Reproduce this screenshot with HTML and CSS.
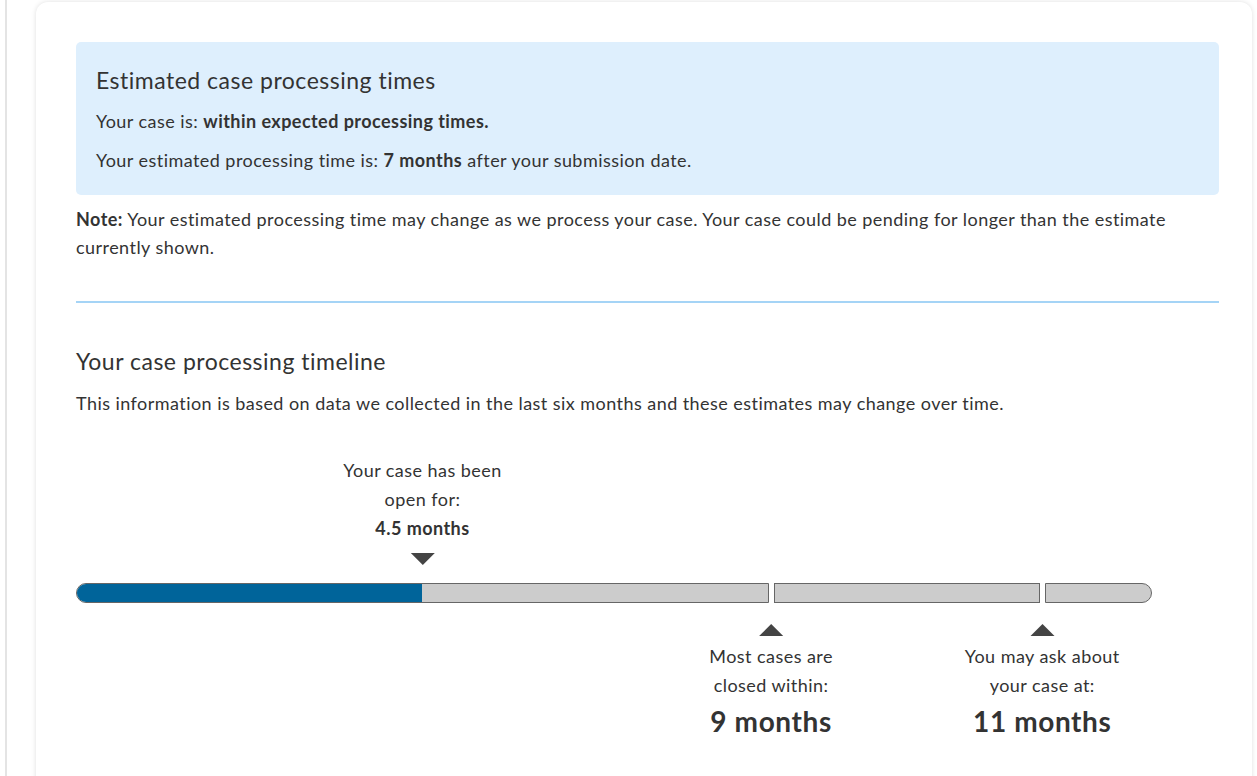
FILE: index.html
```html
<!DOCTYPE html>
<html lang="en">
<head>
<meta charset="utf-8">
<title>Case processing times</title>
<link rel="stylesheet" href="styles.css">
</head>
<body>
<div class="frame">
  <main class="card">
    <section class="info-box">
      <h2 class="box-title">Estimated case processing times</h2>
      <p class="box-line">Your case is: <strong>within expected processing times.</strong></p>
      <p class="box-line">Your estimated processing time is: <strong>7 months</strong> after your submission date.</p>
    </section>
    <p class="note"><strong>Note:</strong> Your estimated processing time may change as we process your case. Your case could be pending for longer than the estimate currently shown.</p>
    <hr class="divider">
    <h2 class="section-title">Your case processing timeline</h2>
    <p class="section-text">This information is based on data we collected in the last six months and these estimates may change over time.</p>

    <div class="timeline">
      <div class="top-row">
        <div class="marker marker-down" style="left: 32.2%">
          <div class="marker-label">Your case has been<br>open for:<br><strong>4.5 months</strong></div>
          <span class="tri tri-down"></span>
        </div>
      </div>
      <div class="bar">
        <div class="seg seg-first" style="flex-basis: 693px"><div class="fill" style="width: 49.9%"></div></div>
        <div class="seg" style="flex-basis: 266px"></div>
        <div class="seg seg-last" style="flex-basis: 107px"></div>
      </div>
      <div class="bottom-row">
        <div class="marker marker-up" style="left: 64.6%">
          <span class="tri tri-up"></span>
          <div class="marker-label">Most cases are<br>closed within:</div>
          <div class="marker-big">9 months</div>
        </div>
        <div class="marker marker-up" style="left: 89.8%">
          <span class="tri tri-up"></span>
          <div class="marker-label">You may ask about<br>your case at:</div>
          <div class="marker-big">11 months</div>
        </div>
      </div>
    </div>
  </main>
</div>
</body>
</html>
```

FILE: styles.css
```css
* { box-sizing: border-box; }

html, body {
  margin: 0;
  padding: 0;
  background: #ffffff;
  height: 100%;
  overflow: hidden;
}

body {
  font-family: "Lato", "Liberation Sans", sans-serif;
  color: #333333;
  font-size: 18px;
  letter-spacing: 0.45px;
}

.frame {
  margin-left: 5px;
  border-left: 2px solid #e4e4e4;
  padding: 2px 5px 0 29px;
  min-height: 100%;
}

.card {
  background: #ffffff;
  border-radius: 12px;
  box-shadow: 0 0 5px rgba(0, 0, 0, 0.13);
  padding: 40px 33px 40px 40px;
  min-height: 800px;
}

.info-box {
  background: #deeffd;
  border-radius: 5px;
  padding: 23px 20px 21px 20px;
}

.box-title {
  margin: 0 0 12px 0;
  font-size: 23px;
  line-height: 30px;
  font-weight: 400;
  letter-spacing: 0.5px;
}

.box-line {
  margin: 0;
  line-height: 28px;
}

.box-line + .box-line { margin-top: 11px; }

strong { font-weight: 700; }

.note {
  margin: 10px 0 0 0;
  line-height: 28px;
}

.divider {
  border: 0;
  height: 2px;
  background: #a5d4f6;
  margin: 40px 0 0 0;
}

.section-title {
  margin: 43px 0 0 0;
  font-size: 23px;
  line-height: 30px;
  font-weight: 400;
  letter-spacing: 0.5px;
}

.section-text {
  margin: 13px 0 0 0;
  line-height: 28px;
}

.timeline {
  margin-top: 38px;
  width: 1076px;
}

.top-row {
  position: relative;
  height: 128px;
}

.bottom-row {
  position: relative;
  height: 170px;
}

.marker {
  position: absolute;
  transform: translateX(-50%);
  display: flex;
  flex-direction: column;
  align-items: center;
  text-align: center;
  white-space: nowrap;
}

.marker-down { bottom: 18px; }
.marker-up { top: 21px; }

.marker-label {
  line-height: 29px;
}

.marker-big {
  font-size: 28px;
  font-weight: 700;
  line-height: 36px;
  margin-top: 3px;
  letter-spacing: 0.6px;
}

.tri {
  display: block;
  width: 0;
  height: 0;
  border-left: 12px solid transparent;
  border-right: 12px solid transparent;
}

.tri-down {
  border-top: 12px solid #444444;
  margin-top: 10px;
}

.tri-up {
  border-bottom: 12px solid #444444;
  margin-bottom: 6px;
}

.bar {
  display: flex;
  gap: 5px;
  height: 20px;
}

.seg {
  flex-shrink: 0;
  flex-grow: 0;
  background: #cccccc;
  border: 1px solid #666666;
  overflow: hidden;
}

.seg-first { border-radius: 10px 0 0 10px; }
.seg-last { border-radius: 0 10px 10px 0; }

.fill {
  height: 100%;
  background: #00649a;
}
```
